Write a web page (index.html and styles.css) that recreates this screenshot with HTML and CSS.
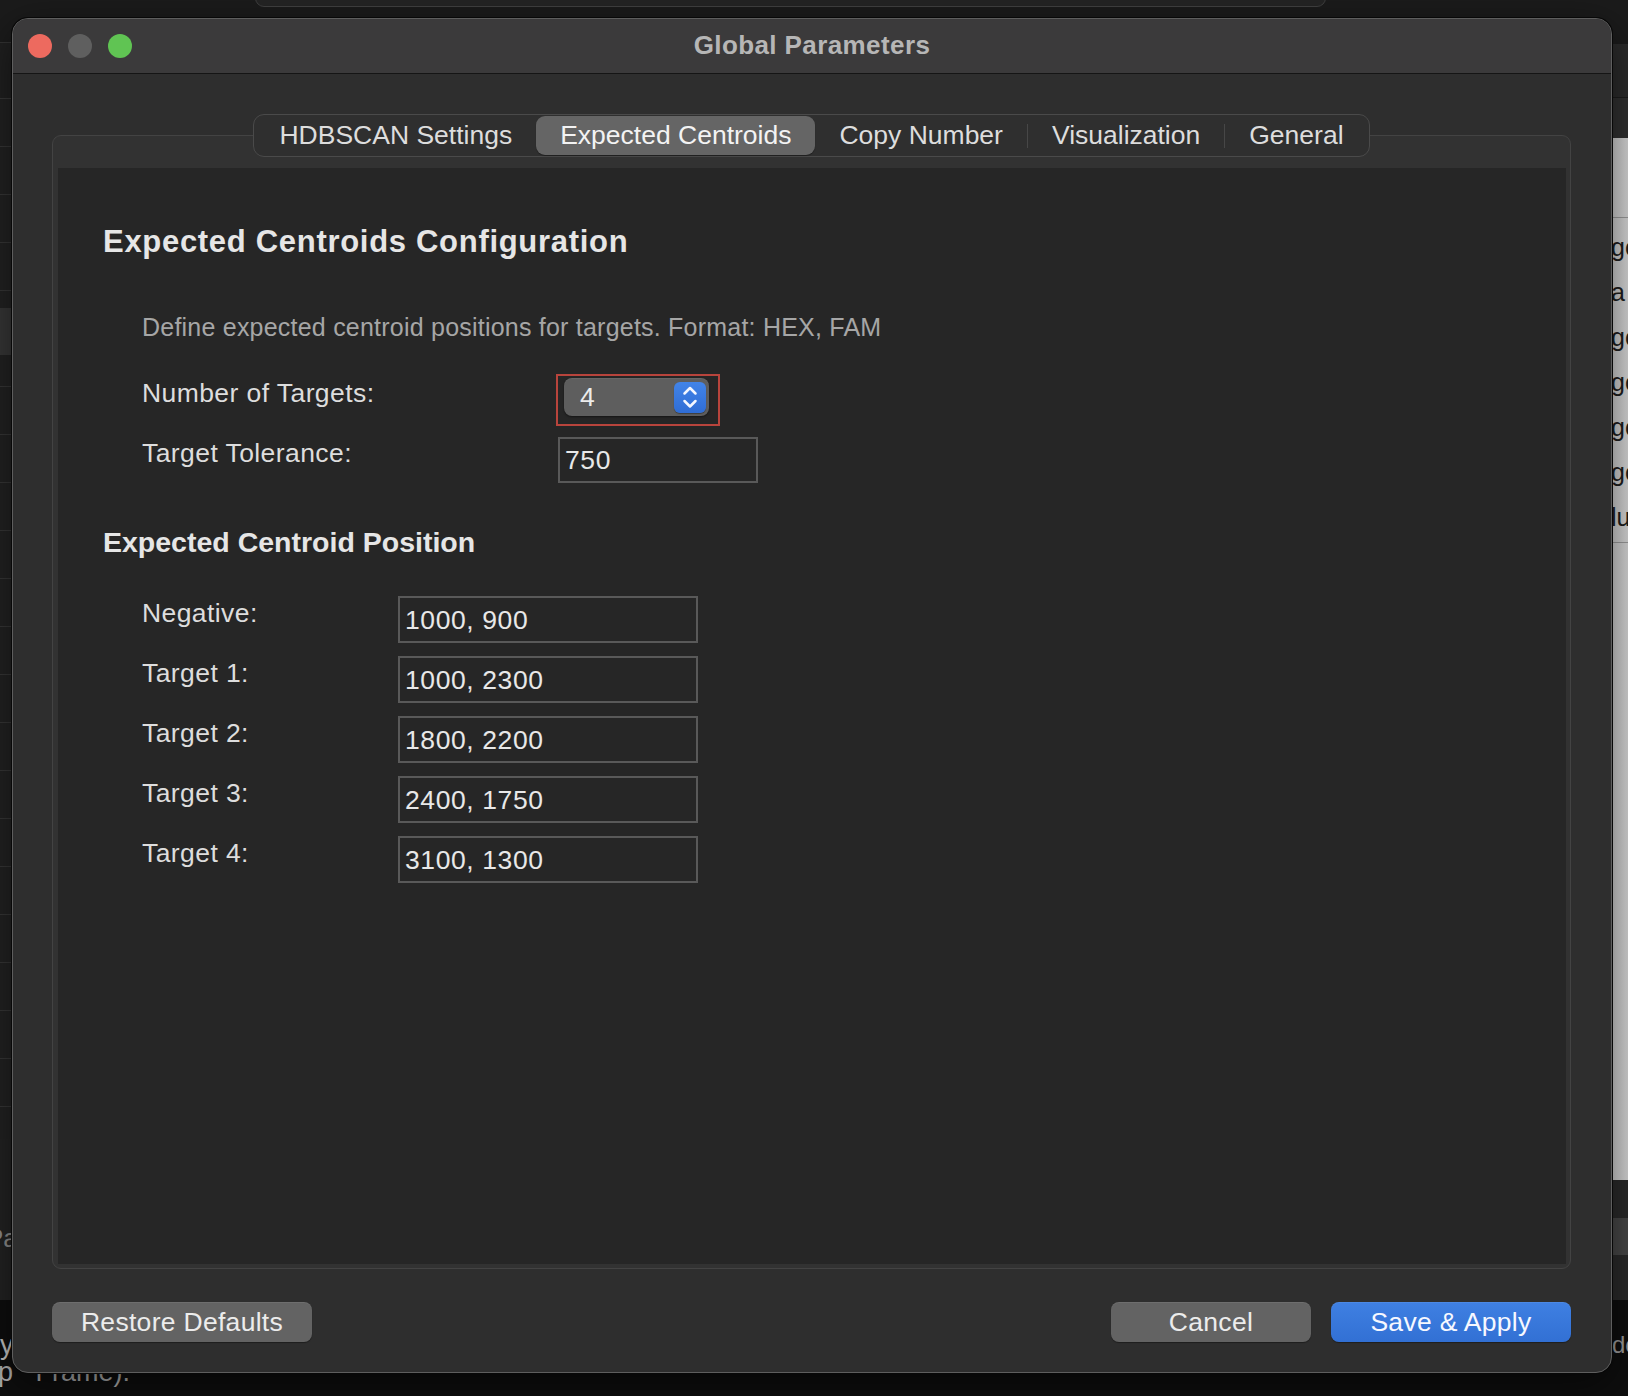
FILE: index.html
```html
<!DOCTYPE html>
<html lang="en">
<head>
<meta charset="utf-8">
<title>Global Parameters</title>
<link rel="stylesheet" href="styles.css">
</head>
<body>
<div class="bg-topwin"></div>
<div class="bg-left">
  <div class="bg-left-head"></div>
  <div class="bg-left-rows"><div class="bg-left-sel"></div></div>
  <div class="bg-left-text">Pa</div>
</div>
<div class="bg-right">
  <div class="bg-right-head"></div>
  <div class="bg-right-sub"></div>
  <div class="bg-right-panel">
    <div class="bg-right-list">
      <div>ge</div>
      <div>a</div>
      <div>ge</div>
      <div>ge</div>
      <div>ge</div>
      <div>ge</div>
      <div>lu</div>
    </div>
  </div>
  <div class="bg-right-dark"><div class="bg-right-band"></div></div>
</div>
<div class="bg-bottom">
  <div class="bg-bottom-l1">by</div>
  <div class="bg-bottom-l2">p&nbsp;&nbsp;&nbsp;Frame).</div>
  <div class="bg-bottom-right">do</div>
</div>

<div class="window">
  <div class="titlebar">
    <div class="lights">
      <span class="light light-red"></span>
      <span class="light light-gray"></span>
      <span class="light light-green"></span>
    </div>
    <div class="title">Global Parameters</div>
    <div></div>
  </div>
  <div class="body">
    <div class="tabs">
      <div class="tab">HDBSCAN Settings</div>
      <div class="tab active">Expected Centroids</div>
      <div class="tab">Copy Number</div>
      <span class="divider"></span>
      <div class="tab">Visualization</div>
      <span class="divider"></span>
      <div class="tab">General</div>
    </div>
    <div class="frame">
      <div class="pane">
        <h1 class="h1">Expected Centroids Configuration</h1>
        <p class="desc">Define expected centroid positions for targets. Format: HEX, FAM</p>
        <div class="form form-top">
          <div class="row spin-row">
            <div class="label label-top">Number of Targets:</div>
            <div class="focus">
              <div class="spin">
                <span class="spin-val">4</span>
                <span class="stepper">
                  <svg width="32" height="31" viewBox="0 0 32 31"><path d="M10.5 11.5 L16 6 L21.5 11.5 M10.5 19 L16 24.5 L21.5 19" fill="none" stroke="#f4f7ff" stroke-width="2.5" stroke-linecap="round" stroke-linejoin="round"/></svg>
                </span>
              </div>
            </div>
          </div>
          <div class="row">
            <div class="label label-top label-tol">Target Tolerance:</div>
            <div class="field field-tol">750</div>
          </div>
        </div>
        <h2 class="h2">Expected Centroid Position</h2>
        <div class="form form-pos">
          <div class="row"><div class="label label-pos">Negative:</div><div class="field field-pos">1000, 900</div></div>
          <div class="row"><div class="label label-pos">Target 1:</div><div class="field field-pos">1000, 2300</div></div>
          <div class="row"><div class="label label-pos">Target 2:</div><div class="field field-pos">1800, 2200</div></div>
          <div class="row"><div class="label label-pos">Target 3:</div><div class="field field-pos">2400, 1750</div></div>
          <div class="row"><div class="label label-pos">Target 4:</div><div class="field field-pos">3100, 1300</div></div>
        </div>
      </div>
    </div>
    <div class="footer">
      <div class="btn btn-restore">Restore Defaults</div>
      <div class="btn-group">
        <div class="btn btn-cancel">Cancel</div>
        <div class="btn btn-save">Save &amp; Apply</div>
      </div>
    </div>
  </div>
</div>
</body>
</html>
```

FILE: styles.css
```css
* { box-sizing: border-box; }
html, body { margin: 0; padding: 0; }
body {
  width: 1628px;
  height: 1396px;
  overflow: hidden;
  position: relative;
  background: #1b1b1b;
  font-family: "Liberation Sans", Arial, sans-serif;
}

/* ---------- background desktop windows ---------- */
.bg-topwin {
  position: absolute;
  left: 255px; top: -12px;
  width: 1071px; height: 19px;
  background: #242424;
  border: 1px solid #404040;
  border-radius: 0 0 9px 9px;
}
.bg-left {
  position: absolute;
  left: 0; top: 42px;
  width: 40px; height: 1258px;
  background: #232323;
  border-top: 1px solid #333;
}
.bg-left-head { height: 56px; background: #202020; border-bottom: 1px solid #383838; }
.bg-left-rows {
  position: relative;
  height: 1040px;
  background: repeating-linear-gradient(to bottom, #222 0 47px, #363636 47px 48px);
}
.bg-left-sel { position: absolute; left: 0; top: 209px; width: 40px; height: 47px; background: #373737; }
.bg-left-text {
  position: absolute; left: -14px; top: 1180px;
  font-size: 26px; color: #8d8d8d;
}
.bg-right {
  position: absolute;
  left: 1590px; top: 44px;
  width: 38px; height: 1256px;
  display: flex; flex-direction: column;
}
.bg-right-head { height: 54px; background: #2b2b2b; border-bottom: 1px solid #1c1c1c; }
.bg-right-sub { height: 40px; background: #303030; }
.bg-right-panel {
  height: 1042px;
  background: linear-gradient(to right, #c9c9c9, #d4d4d4);
  padding-top: 79px;
}
.bg-right-list {
  border-top: 1px solid #9a9a9a;
  border-bottom: 1px solid #9a9a9a;
  padding: 7px 0 2px 21px;
  font-size: 25px;
  line-height: 45px;
  color: #1e1e1e;
}
.bg-right-dark { flex: 1; background: #2a2a2a; padding-top: 38px; }
.bg-right-band { height: 37px; background: #474747; }
.bg-bottom {
  position: absolute;
  left: 0; top: 1300px;
  width: 1628px; height: 96px;
  background: #0e0e0e;
}
.bg-bottom-l1 {
  position: absolute; left: -15px; top: 31px;
  font-size: 27px; line-height: 28px; color: #c4c4c4;
}
.bg-bottom-l2 {
  position: absolute; left: -2px; top: 58px;
  font-size: 27px; line-height: 28px; color: #b0b0b0;
}
.bg-bottom-right {
  position: absolute; left: 1612px; top: 31px;
  font-size: 24px; color: #9c9c9c;
}

/* ---------- dialog window ---------- */
.window {
  position: absolute;
  left: 12px; top: 18px;
  width: 1600px; height: 1355px;
  z-index: 2;
  display: flex;
  flex-direction: column;
  background: #2e2e2e;
  border: 1px solid #5e5e5e;
  border-radius: 16px;
  overflow: hidden;
  box-shadow: 0 0 0 1px #080808, 0 12px 40px rgba(0, 0, 0, 0.55);
}
.titlebar {
  flex: none;
  height: 55px;
  display: grid;
  grid-template-columns: 1fr auto 1fr;
  align-items: center;
  padding: 0 15px;
  background: #3b3a3b;
  border-bottom: 1px solid #151515;
}
.lights { display: flex; gap: 16px; }
.light { width: 24px; height: 24px; border-radius: 50%; }
.light-red { background: #ed6a5f; }
.light-gray { background: #5f5f5f; }
.light-green { background: #60c453; }
.title {
  font-size: 26px;
  line-height: 30px;
  margin-top: -2px;
  font-weight: bold;
  letter-spacing: 0.4px;
  color: #b6b6b6;
}

.body {
  flex: 1;
  display: flex;
  flex-direction: column;
  padding: 40px 40px 0 39px;
}

/* tabs */
.tabs {
  align-self: center;
  position: relative;
  z-index: 1;
  display: flex;
  align-items: center;
  height: 43px;
  padding: 1px;
  margin-bottom: -22px;
  background: #2f2f2f;
  border: 1px solid #4a4a4a;
  border-radius: 11px;
}
.tab {
  height: 39px;
  line-height: 39px;
  padding: 0 24px;
  font-size: 26.5px;
  color: #dddddd;
  border-radius: 9px;
  white-space: nowrap;
}
.tab.active {
  background: #656565;
  color: #f3f3f3;
  box-shadow: 0 1px 1px rgba(0, 0, 0, 0.35);
}
.divider { width: 1px; height: 24px; background: #474747; }

/* group frame */
.frame {
  flex: 1;
  display: flex;
  padding: 32px 4px 4px 5px;
  background: #323232;
  border: 1px solid #434343;
  border-radius: 9px;
}
.pane {
  flex: 1;
  background: #262626;
  padding: 55px 0 0 45px;
}
.h1 {
  margin: 0;
  font-size: 31px;
  line-height: 38px;
  font-weight: bold;
  letter-spacing: 0.7px;
  color: #e6e6e6;
}
.desc {
  margin: 51px 0 0 39px;
  font-size: 25px;
  line-height: 30px;
  letter-spacing: 0.22px;
  color: #a6a6a6;
}
.h2 {
  margin: 41px 0 0;
  font-size: 28.5px;
  line-height: 36px;
  font-weight: bold;
  color: #e6e6e6;
}

.form { display: flex; flex-direction: column; margin-left: 39px; }
.form-top { margin-top: 32px; gap: 11px; }
.form-pos { margin-top: 36px; gap: 13px; }
.row { display: flex; align-items: flex-start; }
.label {
  font-size: 26.5px;
  line-height: 30px;
  letter-spacing: 0.42px;
  color: #dddddd;
  padding-top: 2px;
}
.label-top { width: 416px; }
.spin-row .label { padding-top: 4px; }
.label-tol { padding-top: 1px; }
.label-pos { width: 256px; }

.focus {
  margin-left: -2px;
  width: 164px;
  height: 52px;
  padding: 2px 9px 8px 6px;
  border: 2px solid #b8443c;
}
.spin {
  width: 145px;
  height: 38px;
  display: flex;
  align-items: center;
  justify-content: space-between;
  padding: 0 3px 0 16px;
  background: #5e5e5e;
  border-radius: 8px;
  box-shadow: 0 1px 2px rgba(0, 0, 0, 0.45), inset 0 1px 0 rgba(255, 255, 255, 0.06);
}
.spin-val {
  font-size: 26.5px;
  line-height: 30px;
  color: #ececec;
}
.stepper {
  display: flex;
  width: 32px;
  height: 31px;
  border-radius: 6px;
  background: linear-gradient(#4284e8, #2f6dd5);
  box-shadow: 0 1px 1px rgba(0, 0, 0, 0.35);
}

.field {
  display: flex;
  align-items: center;
  padding-left: 5px;
  background: #262626;
  border: 2px solid #595959;
  font-size: 26.5px;
  line-height: 30px;
  letter-spacing: 0.6px;
  color: #e8e8e8;
}
.field-tol { width: 200px; height: 46px; }
.field-pos { width: 300px; height: 47px; }

/* footer buttons */
.footer {
  flex: none;
  display: flex;
  justify-content: space-between;
  padding: 33px 0 30px;
}
.btn-group { display: flex; gap: 20px; }
.btn {
  height: 40px;
  display: flex;
  align-items: center;
  justify-content: center;
  border-radius: 8px;
  background: #636363;
  font-size: 26.5px;
  letter-spacing: 0.3px;
  color: #ececec;
  box-shadow: inset 0 1px 0 rgba(255, 255, 255, 0.07), 0 1px 1px rgba(0, 0, 0, 0.35);
}
.btn-restore { width: 260px; }
.btn-cancel { width: 200px; }
.btn-save {
  width: 240px;
  background: linear-gradient(#3f80e2, #3270d4);
  color: #f6f8ff;
}
```
